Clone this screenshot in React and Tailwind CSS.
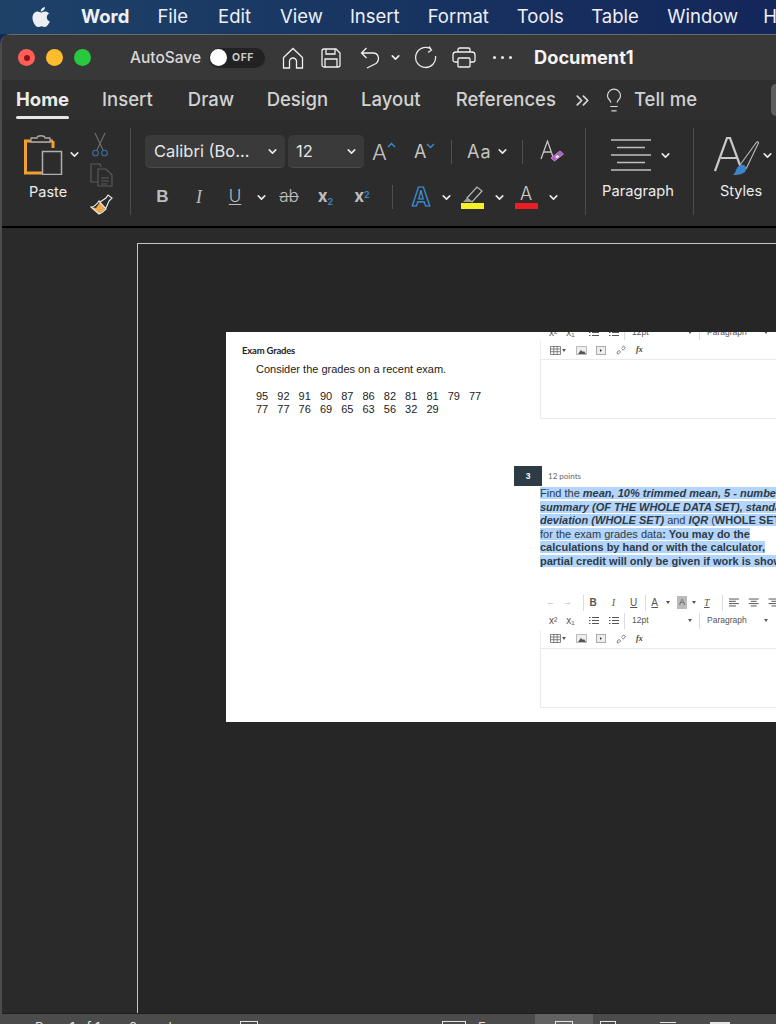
import React from 'react';
import { ChevronDown, ChevronsRight, Lightbulb } from 'lucide-react';

const menuItems = [
  { label: "File", cls: "ml-[28px]" },
  { label: "Edit", cls: "ml-[30px]" },
  { label: "View", cls: "ml-[29px]" },
  { label: "Insert", cls: "ml-[27px]" },
  { label: "Format", cls: "ml-[28px]" },
  { label: "Tools", cls: "ml-[28px]" },
  { label: "Table", cls: "ml-[27.500px]" },
  { label: "Window", cls: "ml-[28.500px]" },
  { label: "Help", cls: "ml-[25px]" },
];

const tabs = [
  { label: "Insert", cls: "ml-[33px]" },
  { label: "Draw", cls: "ml-[35px]" },
  { label: "Design", cls: "ml-[32.500px]" },
  { label: "Layout", cls: "ml-[33px]" },
  { label: "References", cls: "ml-[35px]" },
];

const grades = [
  ["95", "92", "91", "90", "87", "86", "82", "81", "81", "79", "77"],
  ["77", "77", "76", "69", "65", "63", "56", "32", "29"],
];

const Chev = ({ className = "" }) => (
  <ChevronDown size={13} strokeWidth={3} className={"text-[#e8e8e8] shrink-0 " + className} />
);

const RibbonDivider = () => <div className="w-px h-[87px] bg-[#4c4c4c] shrink-0" />;

const MiniDivider = () => <div className="w-px h-[24px] bg-[#505050] shrink-0" />;

// icon row of the pasted rich text editor
const MiniCaret = () => <span className="block w-0 h-0 border-x-[2.500px] border-x-transparent border-t-[3px] border-t-[#555]" />;

const MiniList = () => (
  <svg width="10" height="9" viewBox="0 0 10 9" fill="none" stroke="#555" strokeWidth="1">
    <path d="M3 1.500h7M3 4.500h7M3 7.500h7M0 1.500h1.500M0 4.500h1.500M0 7.500h1.500" />
  </svg>
);

const EditorRows = () => (
  <div className="font-['Liberation_Sans',sans-serif] text-[#555]">
    <div className="flex items-center h-[18px]">
      <div className="w-[49px] flex items-center gap-[9px] pl-[9px] text-[10px]">
        <span>x²</span><span>x₁</span>
      </div>
      <div className="w-[35px] flex items-center gap-[10px]">
        <MiniList /><MiniList />
      </div>
      <div className="w-px h-[16px] bg-[#ddd]" />
      <div className="w-[74px] flex items-center justify-between pl-[7px] pr-[7px] text-[8.500px]">
        <span>12pt</span><MiniCaret />
      </div>
      <div className="w-px h-[16px] bg-[#ddd]" />
      <div className="w-[72px] flex items-center justify-between pl-[7px] pr-[4px] text-[8.500px]">
        <span>Paragraph</span><MiniCaret />
      </div>
    </div>
    <div className="flex items-center h-[18px] pl-[9px] border-l border-[#eee]">
      <svg width="11" height="9" viewBox="0 0 11 9" fill="none" stroke="#666" strokeWidth="0.8">
        <path d="M.5.5h10v8H.5zM.5 3h10M.5 5.700h10M3.800.5v8M7.200.5v8" />
      </svg>
      <span className="ml-[1px] mr-[10px]"><MiniCaret /></span>
      <svg width="11" height="9" viewBox="0 0 11 9" className="mr-[9px]">
        <rect x=".5" y=".5" width="10" height="8" fill="#eee" stroke="#bbb" />
        <path d="M2 8l3-4 2 2 1-1 2 3z" fill="#555" />
      </svg>
      <svg width="10" height="9" viewBox="0 0 10 9" className="mr-[10px]">
        <rect x=".5" y=".5" width="9" height="8" fill="#eee" stroke="#aaa" />
        <path d="M4 3l2 1.500L4 6z" fill="#444" />
      </svg>
      <svg width="10" height="10" viewBox="0 0 10 10" fill="none" stroke="#777" strokeWidth="0.9" className="mr-[10px]">
        <path d="M1.500 6.500l-.5 2 1.500.5 2-2-1-1.500zM5.500 3.500l2-2.500 2 1.500-2 2.500-1.500-.5" />
      </svg>
      <span className="font-['Liberation_Serif',serif] italic font-bold text-[8px] text-[#444]">fx</span>
    </div>
  </div>
);

const EditorBox = () => <div className="h-[60px] border border-[#e9e9e9] border-r-0 w-[240px]" />;

const Sel = ({ children, className = "" }) => <span className={"bg-[#b3d4fb] " + className}>{children}</span>;

const App = () => {
  return (
    <div className="w-[776px] h-[1024px] overflow-hidden bg-[#13274f] font-['Inter',sans-serif]">
      {/* mac menu bar */}
      <div className="h-[34px] flex items-center text-[#eef0f5] text-[18.500px] bg-gradient-to-r from-[#1d4268] to-[#14265a] whitespace-nowrap overflow-hidden">
        <svg width="20" height="23" viewBox="0 0 20 23" className="ml-[31px] mr-[30px] shrink-0" fill="#eceef2">
          <path d="M14 1c.2 2-1.800 4.500-4.300 4.500C9.500 3.300 11.800 1.200 14 1zM10 6.500c1 0 2.300-1.100 4.200-1.100 1.500 0 3 .8 3.900 2.200-3.400 1.900-2.800 6.700.7 8-.9 2.300-2.900 5.400-4.700 5.400-1.300 0-1.800-.8-3.500-.8s-2.300.8-3.500.8C4.600 21 1.500 15.700 1.500 11.900c0-3.900 2.500-6.300 5-6.300 1.500 0 2.700.9 3.500.9z" />
        </svg>
        <span className="font-bold">Word</span>
        {menuItems.map((m) => (
          <span key={m.label} className={m.cls}>{m.label}</span>
        ))}
      </div>

      {/* word window */}
      <div className="h-[990px] border-l-2 border-[#4c4c4c] rounded-tl-[10px] overflow-hidden flex flex-col bg-[#292929]">
        {/* title bar */}
        <div className="h-[46px] shrink-0 bg-[#383838] border-t border-[#6a6a6a] flex items-center text-[#d8d8d8] whitespace-nowrap">
          <div className="ml-[16px] w-[17px] h-[17px] rounded-full bg-[#ff5f57] flex items-center justify-center">
            <div className="w-[6px] h-[6px] rounded-full bg-[#8e1414]" />
          </div>
          <div className="ml-[11px] w-[17px] h-[17px] rounded-full bg-[#febc2e]" />
          <div className="ml-[11px] w-[17px] h-[17px] rounded-full bg-[#28c840]" />
          <span className="ml-[39px] text-[15.500px] font-medium">AutoSave</span>
          <div className="ml-[8px] w-[56px] h-[20px] rounded-full bg-[#222] flex items-center">
            <div className="ml-px w-[17px] h-[17px] rounded-full bg-white" />
            <span className="ml-[5px] text-[10.500px] font-bold tracking-[0.5px] text-[#c8c8c8]">OFF</span>
          </div>
          <svg width="22" height="22" viewBox="0 0 22 22" fill="none" stroke="#f0f0f0" strokeWidth="1.300" className="ml-[17px]">
            <path d="M1.500 10.500L11 1.500l9.500 9v10.500h-6v-6.500a3.500 3.500 0 0 0-7 0V21h-6z" />
          </svg>
          <svg width="20" height="20" viewBox="0 0 20 20" fill="none" stroke="#f0f0f0" strokeWidth="1.300" className="ml-[17px]">
            <path d="M3 1h12l4 4v12a2 2 0 0 1-2 2H3a2 2 0 0 1-2-2V3a2 2 0 0 1 2-2zM5 1v5h9V1M4 19v-8h12v8" />
          </svg>
          <svg width="20" height="22" viewBox="0 0 20 22" fill="none" stroke="#f0f0f0" strokeWidth="1.300" className="ml-[19px]">
            <path d="M6.500 1L1.500 6l5 5M1.500 6H13c6 0 7 7 3 10.500L7 21" />
          </svg>
          <ChevronDown size={13} strokeWidth={3} className="ml-[9px] text-[#eee]" />
          <svg width="23" height="23" viewBox="0 0 23 23" fill="none" stroke="#e8e8e8" strokeWidth="1.300" className="ml-[12px]">
            <path d="M16 2.500A10 10 0 1 0 21.500 10M15 .5l2.500 3.500-3.500 2.500" />
          </svg>
          <svg width="24" height="21" viewBox="0 0 24 21" fill="none" stroke="#f0f0f0" strokeWidth="1.300" className="ml-[15px]">
            <path d="M6 5V2.500A1.500 1.500 0 0 1 7.500 1h9A1.500 1.500 0 0 1 18 2.500V5M6 15H3a2 2 0 0 1-2-2V8a3 3 0 0 1 3-3h16a3 3 0 0 1 3 3v5a2 2 0 0 1-2 2h-3M7 11h10a1 1 0 0 1 1 1v7a1 1 0 0 1-1 1H7a1 1 0 0 1-1-1v-7a1 1 0 0 1 1-1z" />
          </svg>
          <div className="ml-[17px] flex gap-[5px]">
            <div className="w-[3px] h-[3px] rounded-full bg-[#eee]" />
            <div className="w-[3px] h-[3px] rounded-full bg-[#eee]" />
            <div className="w-[3px] h-[3px] rounded-full bg-[#eee]" />
          </div>
          <span className="ml-[22px] text-[18.200px] font-bold text-[#f4f4f4]">Document1</span>
        </div>

        {/* tabs */}
        <div className="h-[40px] shrink-0 bg-[#2f2f2f] flex items-center pl-[14px] text-[18.500px] font-medium text-[#d2d2d2] whitespace-nowrap">
          <div className="relative font-bold text-[#ececec]">
            Home
            <div className="absolute left-0 right-0 top-[30px] h-[3px] rounded-full bg-[#e6e6e6]" />
          </div>
          {tabs.map((t) => (
            <span key={t.label} className={t.cls}>{t.label}</span>
          ))}
          <ChevronsRight size={21} strokeWidth={2} className="ml-[16px] text-[#d8d8d8] shrink-0" />
          <Lightbulb size={26} strokeWidth={1.100} className="ml-[8px] text-[#d8d8d8] shrink-0" />
          <span className="ml-[7px]">Tell me</span>
          <div className="ml-[74px] w-[20px] h-[32px] rounded-[5px] bg-[#5e5e5e] shrink-0" />
        </div>

        {/* ribbon */}
        <div className="h-[108px] shrink-0 bg-[#2c2c2c] border-b-2 border-black flex items-start pt-[8px] text-[#ececec] whitespace-nowrap">
          {/* clipboard */}
          <div className="w-[84px] shrink-0 pl-[22px] pt-[5px]">
            <div className="flex items-center">
              <svg width="40" height="42" viewBox="0 0 40 42" fill="none">
                <path d="M29 8h-27.500v32H18" stroke="#f0a030" strokeWidth="3" />
                <path d="M29 8v7" stroke="#f0a030" strokeWidth="3" />
                <path d="M7 9V5h6c0-3 8-3 8 0h5v4z" fill="#2c2c2c" stroke="#a8a8a8" strokeWidth="1.300" />
                <rect x="18.500" y="18.500" width="19" height="23" fill="#2c2c2c" stroke="#b0b0b0" strokeWidth="1.500" />
              </svg>
              <Chev className="ml-[4px]" />
            </div>
            <div className="mt-[6px] pl-[5px] text-[14.500px]">Paste</div>
          </div>
          <div className="w-[44px] shrink-0 flex flex-col items-start pl-[4px] pt-[5px] gap-[6px]">
            <svg width="16" height="24" viewBox="0 0 16 24" fill="none" strokeWidth="1.100" className="ml-[2px]">
              <path d="M3 0l8 17M13 0L5 17" stroke="#6f6f6f" />
              <circle cx="3.500" cy="20" r="2.800" stroke="#3d6f9e" />
              <circle cx="12.500" cy="20" r="2.800" stroke="#3d6f9e" />
            </svg>
            <svg width="23" height="24" viewBox="0 0 23 24" fill="none" stroke="#5a5a5a" strokeWidth="1.200">
              <path d="M8 19H1V1h9l1 3M8 6h8l6 6v11H8zM11 15h8M11 18h8M11 21h6" />
            </svg>
            <svg width="23" height="21" viewBox="0 0 23 21" fill="none" className="mt-[1px]">
              <path d="M1 13l5 1 4-6 5 7-6 5z" fill="#f0a94a" />
              <path d="M1 13c4 0 6-3 8-6l7 8c-2 2-4 4-7 5zM10 8l6-4 2-3 4 3-3 3-3 7" stroke="#e8e8e8" strokeWidth="1.200" />
            </svg>
          </div>
          <RibbonDivider />

          {/* font */}
          <div className="w-[454px] shrink-0 pl-[14px] pt-[7px]">
            <div className="flex items-center h-[33px]">
              <div className="w-[140px] h-[33px] rounded-[5px] bg-[#3a3a3a] border-b border-[#4a4a4a] flex items-center justify-between pl-[9px] pr-[6px] text-[16.500px] text-[#e6e6e6]">
                <span>Calibri (Bo...</span><Chev />
              </div>
              <div className="ml-[3px] w-[76px] h-[33px] rounded-[5px] bg-[#3a3a3a] border-b border-[#4a4a4a] flex items-center justify-between pl-[8px] pr-[6px] text-[16.500px] text-[#e6e6e6]">
                <span>12</span><Chev />
              </div>
              <div className="ml-[8px] w-[30px] flex items-start text-[22px] leading-none text-[#c4c4c4] font-light">
                A
                <svg width="9" height="6" viewBox="0 0 9 6" fill="none" stroke="#3a86c8" strokeWidth="1.500" className="mt-[1px]"><path d="M1 5l3.500-3.500L8 5" /></svg>
              </div>
              <div className="ml-[12px] w-[28px] flex items-start text-[18px] leading-none text-[#c4c4c4]">
                A
                <svg width="9" height="6" viewBox="0 0 9 6" fill="none" stroke="#3a86c8" strokeWidth="1.500"><path d="M1 1l3.500 3.500L8 1" /></svg>
              </div>
              <div className="ml-[9px]"><MiniDivider /></div>
              <span className="ml-[15px] text-[18px] tracking-[1px] text-[#c4c4c4]">Aa</span>
              <Chev className="ml-[4px]" />
              <div className="ml-[13px]"><MiniDivider /></div>
              <svg width="24" height="24" viewBox="0 0 24 24" fill="none" className="ml-[17px]">
                <path d="M1 19L7.500 1 13 17M3.500 12h8" stroke="#c4c4c4" strokeWidth="1.300" />
                <path d="M11 18l9-7 3.500 3-9 7z" fill="#a864bc" stroke="#c37fd8" strokeWidth="1" />
                <path d="M15 17l2.500-2 2 1.500-2.500 2z" fill="#e8e8e8" />
              </svg>
            </div>
            <div className="flex items-center h-[30px] mt-[14px] text-[#bcbcbc]">
              <span className="w-[35px] text-center font-['Liberation_Sans',sans-serif] font-bold text-[17px]">B</span>
              <span className="w-[38px] text-center font-['Liberation_Serif',serif] italic text-[18px]">I</span>
              <span className="w-[34px] text-center underline underline-offset-2 text-[17px] font-light">U</span>
              <div className="w-[18px] flex justify-center"><Chev /></div>
              <span className="w-[38px] text-center line-through text-[17px] font-light">ab</span>
              <span className="w-[35px] text-center font-bold text-[17px]">x<sub className="text-[9px] text-[#3a86c8]">2</sub></span>
              <span className="w-[38px] text-center font-bold text-[17px]">x<sup className="text-[9px] text-[#3a86c8]">2</sup></span>
              <div className="w-[22px] flex justify-center"><MiniDivider /></div>
              <div className="w-[36px] flex justify-center">
                <span className="text-[25px] leading-none font-bold text-[#2b2b2b] [-webkit-text-stroke:1.200px_#3e93dc]">A</span>
              </div>
              <div className="w-[14px] flex justify-center"><Chev /></div>
              <div className="w-[40px] flex justify-center">
                <svg width="24" height="24" viewBox="0 0 24 24" fill="none">
                  <path d="M6 13L16 2l5 4-10 11z" stroke="#b8b8b8" strokeWidth="1.200" />
                  <path d="M6 13l5 4H2z" fill="#9c9c9c" />
                  <rect y="18" width="23" height="6" fill="#f4f02a" />
                </svg>
              </div>
              <div className="w-[12px] flex justify-center"><Chev /></div>
              <div className="w-[42px] flex flex-col items-center">
                <span className="text-[18px] leading-[18px] font-light text-[#cfcfcf]">A</span>
                <div className="w-[23px] h-[6px] bg-[#ee1c25]" />
              </div>
              <div className="w-[12px] flex justify-center"><Chev /></div>
            </div>
          </div>
          <RibbonDivider />

          {/* paragraph */}
          <div className="w-[107px] shrink-0 flex flex-col items-center pt-[11px]">
            <div className="flex items-center ml-[4px]">
              <svg width="40" height="32" viewBox="0 0 40 32" fill="none" stroke="#c0c0c0" strokeWidth="1.600">
                <path d="M0 1h40M6 8.500h28M0 16h40M6 23.500h28M0 31h40" />
              </svg>
              <Chev className="ml-[8px]" />
            </div>
            <div className="mt-[9px] text-[14.700px] -ml-[3px]">Paragraph</div>
          </div>
          <RibbonDivider />

          {/* styles */}
          <div className="flex-1 flex flex-col items-start pl-[20px] pt-[9px]">
            <div className="flex items-start">
              <svg width="46" height="42" viewBox="0 0 46 42" fill="none">
                <path d="M1 34L13 1h3l11 30M7 21h16" stroke="#c8c8c8" strokeWidth="2.200" />
                <path d="M32 32l12-25c1.500-2-.5-3-2-1L26 28" stroke="#b4b4b4" strokeWidth="1.200" />
                <path d="M26 28c4-1 7 1 6 5-1 4-7 5-13 5 3-2 3-8 7-10z" fill="#3a86c8" />
              </svg>
              <Chev className="mt-[12px] ml-[1px]" />
            </div>
            <div className="mt-[1px] ml-[6px] text-[14.500px]">Styles</div>
          </div>
        </div>

        {/* document canvas */}
        <div className="flex-1 min-h-0 flex flex-col">
          <div className="flex-1 min-h-0 pl-[135px] pt-[15px] bg-[#2a2a2a]">
            <div className="h-full border-l border-t border-[#c4c4c4] bg-[#262626] pl-[88px] pt-[88px]">
              {/* pasted picture of the quiz */}
              <div className="h-[390px] bg-white flex overflow-hidden text-[#222] font-['Liberation_Sans',sans-serif]">
                <div className="w-[288px] shrink-0 pt-[12px]">
                  <div className="pl-[16px] font-['Lato',sans-serif] font-bold text-[9.500px] leading-[13px] text-[#222] tracking-[-0.2px]">Exam Grades</div>
                  <div className="pl-[30px] mt-[6px] text-[11px] leading-[13px]">Consider the grades on a recent exam.</div>
                  <div className="pl-[30px] mt-[14px] text-[11px] leading-[13px]">
                    {grades.map((row, i) => (
                      <div key={i} className="flex">
                        {row.map((g, j) => (
                          <span key={j} className="w-[21.300px] shrink-0">{g}</span>
                        ))}
                      </div>
                    ))}
                  </div>
                </div>
                <div className="flex-1 min-w-0 -mt-[9px] whitespace-nowrap">
                  <div className="ml-[26px]"><EditorRows /></div>
                  <div className="ml-[26px]"><EditorBox /></div>
                  <div className="mt-[47px] flex items-center">
                    <div className="w-[28px] h-[20px] bg-[#2d3b45] text-white text-[8.500px] font-bold flex items-center justify-center">3</div>
                    <span className="ml-[6px] font-['Lato',sans-serif] text-[8px] text-[#666]">12 points</span>
                  </div>
                  <div className="ml-[26px] mt-px text-[11px] leading-[13.600px] text-[#2d3b45]">
                    <div><Sel>Find the <b><i>mean, 10% trimmed mean, 5 - number</i></b></Sel></div>
                    <div><Sel><b><i>summary (OF THE WHOLE DATA SET), standard</i></b></Sel></div>
                    <div><Sel><b><i>deviation (WHOLE SET)</i> </b>and <b><i>IQR</i></b> (<b>WHOLE SET)</b></Sel></div>
                    <div><Sel>for the exam grades data<b>: You may do the</b></Sel></div>
                    <div><Sel><b>calculations by hand or with the calculator,</b></Sel></div>
                    <div><Sel><b>partial credit will only be given if work is shown</b></Sel></div>
                  </div>
                  <div className="ml-[26px] mt-[25px] h-[18px] flex items-center text-[#555] font-['Liberation_Sans',sans-serif]">
                    <span className="w-[43px] pl-[6px] text-[9px] text-[#bbb] tracking-[8px]">←→</span>
                    <div className="w-px h-[16px] bg-[#ddd]" />
                    <b className="ml-[6px] text-[10px]">B</b>
                    <i className="ml-[15px] text-[10px] font-['Liberation_Serif',serif]">I</i>
                    <span className="ml-[15px] text-[10px] underline">U</span>
                    <div className="ml-[8px] w-px h-[16px] bg-[#ddd]" />
                    <span className="ml-[5px] text-[10px] underline">A</span>
                    <span className="ml-[8px]"><MiniCaret /></span>
                    <span className="ml-[7px] px-[2px] text-[9px] bg-[#bbb]">A</span>
                    <span className="ml-[5px]"><MiniCaret /></span>
                    <i className="ml-[8px] text-[10px] underline font-['Liberation_Serif',serif]">T</i>
                    <div className="ml-[12px] w-px h-[16px] bg-[#ddd]" />
                    <svg width="48" height="9" viewBox="0 0 48 9" fill="none" stroke="#555" className="ml-[6px]">
                      <path d="M0 1h10M0 3.300h7M0 5.600h10M0 8h7M20 1h10M22 3.300h6M20 5.600h10M22 8h6M40 1h8M43 3.300h5M40 5.600h8M43 8h5" />
                    </svg>
                  </div>
                  <div className="ml-[26px]"><EditorRows /></div>
                  <div className="ml-[26px]"><EditorBox /></div>
                </div>
              </div>
            </div>
          </div>

          {/* status bar, cut by the bottom of the screen */}
          <div className="h-[11px] shrink-0 bg-[#4b4b4b] border-t border-[#1e1e1e] flex items-start text-[13px] text-[#e4e4e4] whitespace-nowrap overflow-hidden">
            <span className="w-[94px] shrink-0 ml-[33px] mt-[7px] leading-none">Page 1 of 1</span>
            <span className="w-[76px] shrink-0 mt-[7px] leading-none">0 words</span>
            <div className="ml-[35px] mt-[7px] w-[18px] h-[8px] border border-[#e4e4e4] shrink-0" />
            <div className="ml-[184px] mt-[7px] w-[24px] h-[8px] border border-[#e4e4e4] shrink-0" />
            <span className="ml-[12px] w-[45px] shrink-0 mt-[7px] leading-none">Focus</span>
            <div className="ml-[12px] w-[58px] h-full bg-[#626262] flex justify-center pt-[7px] shrink-0">
              <div className="w-[18px] h-[8px] border border-[#e4e4e4] border-b-0" />
            </div>
            <div className="ml-[7px] mt-[7px] w-[16px] h-[8px] border border-[#e4e4e4] shrink-0" />
            <div className="ml-[44px] mt-[8px] w-[16px] h-[8px] border-t border-[#e4e4e4] shrink-0" />
            <div className="ml-[34px] mt-[8px] w-[20px] h-[8px] border-t-2 border-[#e4e4e4] shrink-0" />
          </div>
        </div>
      </div>
    </div>
  );
};

export default App;
